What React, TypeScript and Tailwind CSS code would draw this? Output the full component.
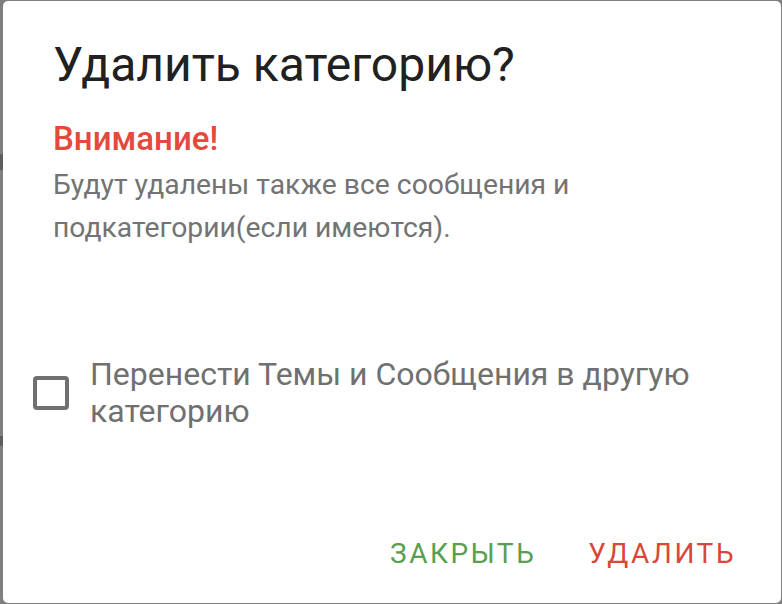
import React from "react";

export default function App() {
  return (
    <div
      className="w-[782px] h-[604px] bg-[#7f7f7f] flex pt-[1px] overflow-hidden"
      style={{ fontFamily: "Roboto, 'Noto Sans', sans-serif" }}
    >
      <div className="w-[3px] flex flex-col shrink-0">
        <div className="h-[153px]" />
        <div className="h-[16px] bg-[#5e5e5e]" />
        <div className="h-[266px]" />
        <div className="h-[10px] bg-[#5e5e5e]" />
      </div>
      <div className="w-[778px] h-[602px] bg-white rounded-[5px] flex flex-col pl-[50px] pr-[45px]">
        <h1 className="mt-[36px] text-[48px] leading-[56px] text-[#212121] font-normal">
          Удалить категорию?
        </h1>
        <div className="mt-[26px] text-[33px] leading-[40px] font-medium text-[#e5493c]">
          Внимание!
        </div>
        <div className="mt-[4px] text-[28.3px] leading-[43px] text-[#737373]">
          Будут удалены также все сообщения и
          <br />
          подкатегории(если имеются).
        </div>
        <div className="mt-[107px] -ml-[20px] flex items-center">
          <div className="w-[36px] h-[34px] border-[4px] border-[#707070] rounded-[4px] shrink-0" />
          <div className="ml-[21px] text-[32px] leading-[37px] text-[#707070]">
            Перенести Темы и Сообщения в другую категорию
          </div>
        </div>
        <div className="mt-auto mb-[29px] flex justify-end gap-[52px]">
          <span className="text-[28px] leading-[40px] tracking-[2.5px] text-[#5a9e4f]">ЗАКРЫТЬ</span>
          <span className="text-[28px] leading-[40px] tracking-[2.5px] text-[#d9473b]">УДАЛИТЬ</span>
        </div>
      </div>
    </div>
  );
}
